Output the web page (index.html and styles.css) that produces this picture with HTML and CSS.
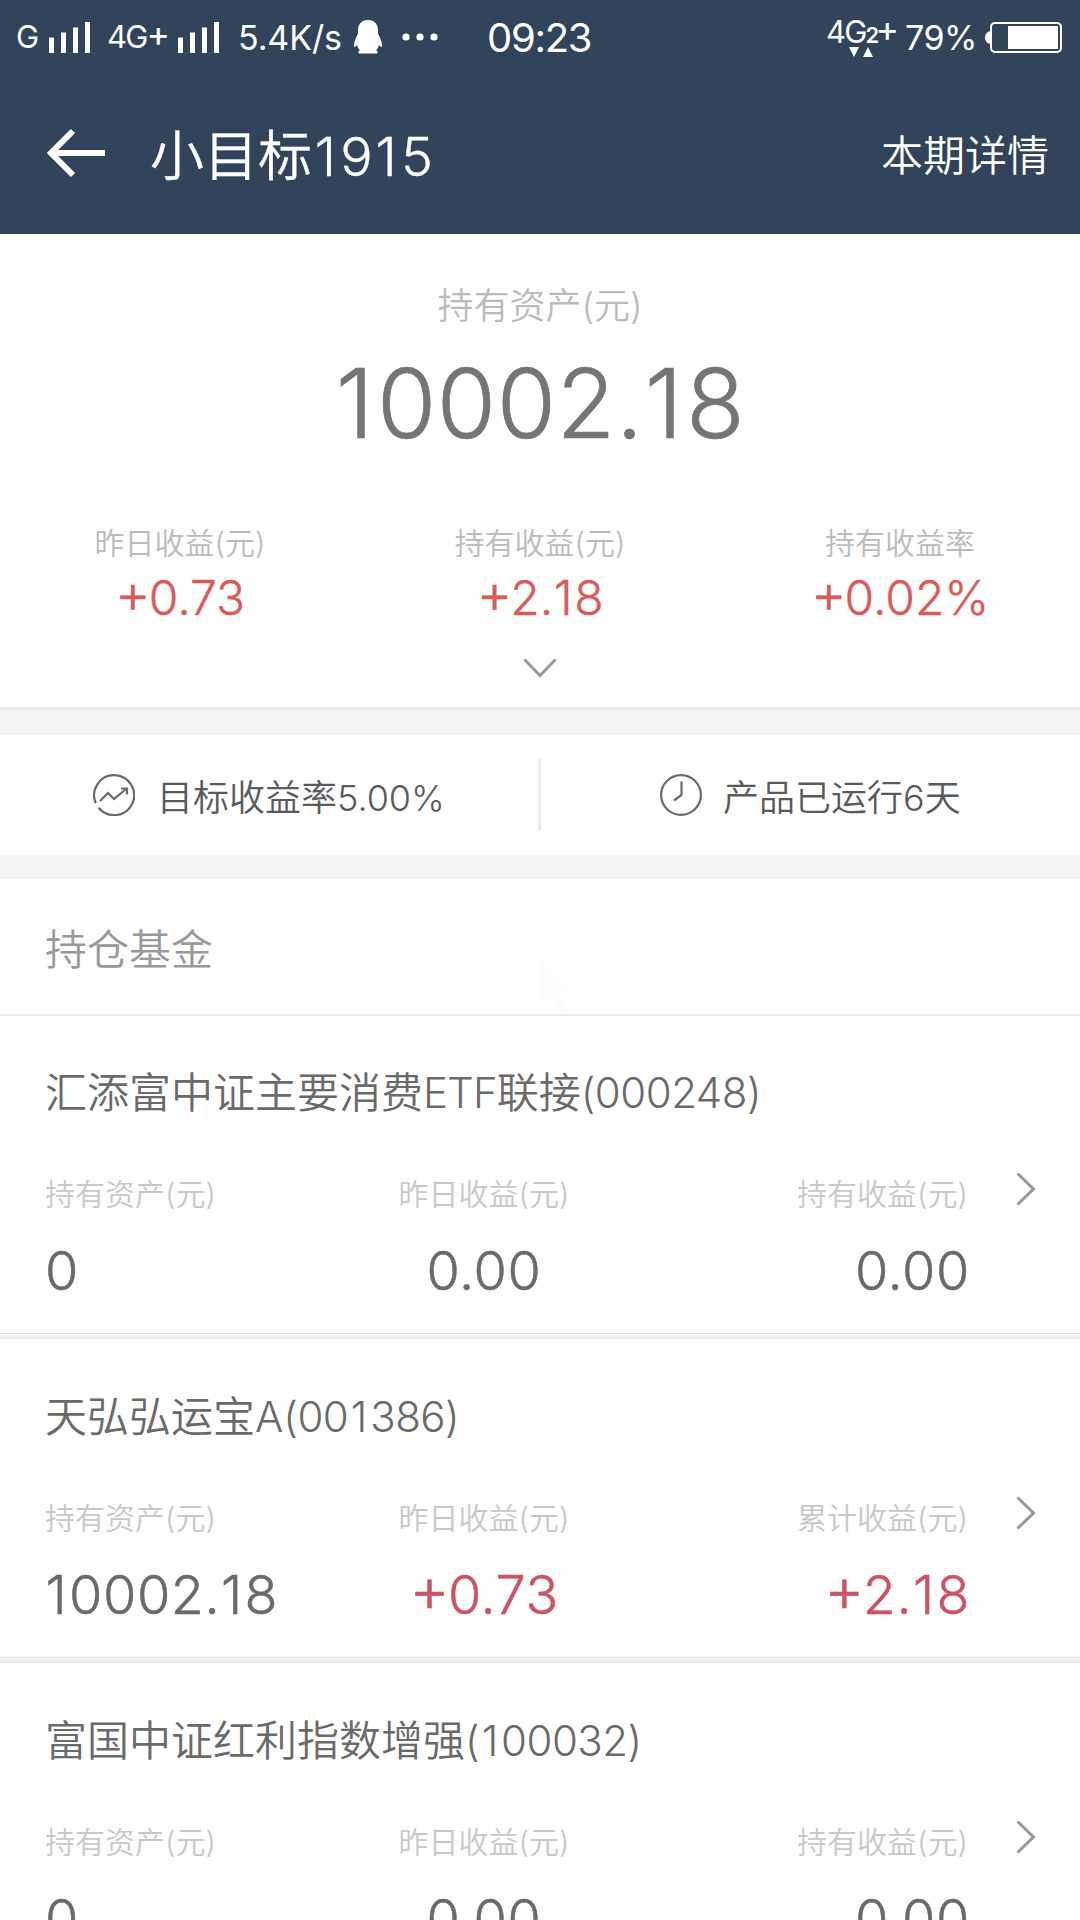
FILE: index.html
```html
<!DOCTYPE html>
<html lang="zh-CN">
<head>
<meta charset="utf-8">
<title>小目标1915</title>
<link rel="stylesheet" href="styles.css">
</head>
<body>
<header class="header">
  <div class="status">
    <span class="net net-g">G</span>
    <svg class="signal" width="42" height="31" viewBox="0 0 42 31"><path d="M0 15.500h5V31H0zM12 10.500h5V31h-5zM24 5.500h5V31h-5zM36 0h5v31h-5z"/></svg>
    <span class="net net-4g">4G<b class="plus">+</b></span>
    <svg class="signal signal-2" width="42" height="31" viewBox="0 0 42 31"><path d="M0 15.500h5V31H0zM12 10.500h5V31h-5zM24 5.500h5V31h-5zM36 0h5v31h-5z"/></svg>
    <span class="speed">5.4K/s</span>
    <svg class="penguin" width="28" height="34" viewBox="0 0 28 34"><path d="M14 0C7.500 0 4 4.500 4 10v3C4 15 0 20 0 25c0 2.500 1 2.500 3 0 .5 2 1.500 4 3 5.500-2 .5-2.500 3 0 3h16c2.500 0 2-2.500 0-3 1.500-1.500 2.500-3.500 3-5.500 2 2.500 3 2.500 3 0 0-5-4-10-4-12v-3C24 4.500 20.500 0 14 0z"/></svg>
    <svg class="dots" width="36" height="8" viewBox="0 0 36 8"><circle cx="4" cy="4" r="3.600"/><circle cx="18" cy="4" r="3.600"/><circle cx="32" cy="4" r="3.600"/></svg>
    <span class="clock">09:23</span>
    <span class="net net-data">4G<small class="sim">2</small><b class="plus">+</b><svg class="updown" width="24" height="10" viewBox="0 0 24 10"><path d="M0 0h10L5 10zM14 10h10L19 0z"/></svg></span>
    <span class="percent">79%</span>
    <svg class="battery" width="77" height="31" viewBox="0 0 77 31"><path d="M5 9.500v12H3.500Q0 19.500 0 15.500T3.500 9.500z"/><rect x="6" y="1" width="70" height="29" rx="4" fill="none" stroke="#fff" stroke-width="2"/><path d="M23 4h50v23H23z"/></svg>
  </div>
  <div class="navbar">
    <svg class="back" width="60" height="50" viewBox="0 0 60 50" fill="none" stroke="#fff" stroke-width="6"><path d="M59 25H5M27 3L5 25l22 22"/></svg>
    <h1 class="title">小目标<b class="one">1</b>9<b class="one">1</b>5</h1>
    <span class="detail">本期详情</span>
  </div>
</header>

<section class="summary">
  <div class="asset-label">持有资产(元)</div>
  <div class="asset"><b class="one">1</b>0002.<b class="one">1</b>8</div>
  <div class="gains">
    <div><div class="label">昨日收益(元)</div><div class="gain"><b class="plus">+</b>0.73</div></div>
    <div><div class="label">持有收益(元)</div><div class="gain"><b class="plus">+</b>2.<b class="one">1</b>8</div></div>
    <div><div class="label">持有收益率</div><div class="gain"><b class="plus">+</b>0.02%</div></div>
  </div>
  <svg class="expand" width="34" height="20" viewBox="0 0 34 20" fill="none" stroke="#9b9b9b" stroke-width="3"><path d="M1.500 1.500L17 17.500 32.500 1.500"/></svg>
</section>

<section class="facts">
  <div class="fact fact-target">
    <svg width="42" height="42" viewBox="0 0 42 42" fill="none" stroke="#6a6a6a" stroke-width="2.200"><path d="M2.800 29.200A20 20 0 1 1 5.600 33.800"/><path d="M7 27l8-8 6 6 12-10"/><path d="M28 14.500h6v6"/></svg>
    <span>目标收益率5.00%</span>
  </div>
  <div class="fact fact-days">
    <svg width="42" height="42" viewBox="0 0 42 42" fill="none" stroke="#6a6a6a" stroke-width="2.200"><circle cx="21" cy="21" r="19.900"/><path d="M21.500 7.500v13.500l-7.500 5.500"/></svg>
    <span>产品已运行6天</span>
  </div>
</section>

<section class="funds">
  <h2 class="section-title">持仓基金
    <svg class="pointer" width="36" height="54" viewBox="0 0 36 54"><path d="M0 0l36 32-16 2 8 18-8 2-9-18-11 9z"/></svg>
  </h2>
  <article class="fund">
    <h3 class="name">汇添富中证主要消费<span class="latin">ETF</span>联接<span class="code">(000248)</span></h3>
    <div class="cols">
      <div class="col"><div class="label">持有资产(元)</div><div class="value">0</div></div>
      <div class="col mid"><div class="label">昨日收益(元)</div><div class="value">0.00</div></div>
      <div class="col end"><div class="label">持有收益(元)</div><div class="value">0.00</div></div>
      <svg class="more" width="20" height="34" viewBox="0 0 20 34"><path d="M1.500 1.500L17.500 17l-16 15.500"/></svg>
    </div>
  </article>
  <article class="fund">
    <h3 class="name">天弘弘运宝A<span class="code">(00<b class="one">1</b>386)</span></h3>
    <div class="cols">
      <div class="col"><div class="label">持有资产(元)</div><div class="value"><b class="one">1</b>0002.<b class="one">1</b>8</div></div>
      <div class="col mid"><div class="label">昨日收益(元)</div><div class="value up"><b class="plus">+</b>0.73</div></div>
      <div class="col end"><div class="label">累计收益(元)</div><div class="value up"><b class="plus">+</b>2.<b class="one">1</b>8</div></div>
      <svg class="more" width="20" height="34" viewBox="0 0 20 34"><path d="M1.500 1.500L17.500 17l-16 15.500"/></svg>
    </div>
  </article>
  <article class="fund">
    <h3 class="name">富国中证红利指数增强<span class="code">(<b class="one">1</b>00032)</span></h3>
    <div class="cols">
      <div class="col"><div class="label">持有资产(元)</div><div class="value">0</div></div>
      <div class="col mid"><div class="label">昨日收益(元)</div><div class="value">0.00</div></div>
      <div class="col end"><div class="label">持有收益(元)</div><div class="value">0.00</div></div>
      <svg class="more" width="20" height="34" viewBox="0 0 20 34"><path d="M1.500 1.500L17.500 17l-16 15.500"/></svg>
    </div>
  </article>
</section>
</body>
</html>
```

FILE: styles.css
```css
* { box-sizing: border-box; }
body {
  margin: 0;
  width: 1080px;
  height: 1920px;
  overflow: hidden;
  background: #f4f4f4;
  font-family: Inter, "Noto Sans CJK SC", sans-serif;
  font-weight: 350;
}
h1, h2, h3 { margin: 0; font-weight: 350; }
b { font-weight: inherit; }
svg { display: block; flex: none; }

/* Numerals: wider "1" and a larger plus sign */
.one { margin: 0 .03em 0 .01em; }
.plus { margin-right: -.04em; font-size: 1.15em; line-height: 0; vertical-align: -.03em; }

.header { height: 234px; background: #31445c; color: #fff; }
.status {
  display: flex;
  align-items: center;
  height: 74px;
  padding-left: 16px;
  font-weight: 400;
  fill: #fff;
  white-space: nowrap;
}
.status span { flex: none; }
.net { font-size: 31px; line-height: 40px; letter-spacing: -1.8px; font-feature-settings: "case"; }
.net-g { width: 33px; }
.net-4g { width: 70px; margin-left: 16px; }
.signal-2 { margin-left: 1px; }
.speed { width: 116px; margin-left: 18px; font-size: 34px; line-height: 40px; padding-top: 2px; }
.speed { letter-spacing: -.1px; }
.percent { letter-spacing: -.5px; }
.dots { margin-left: 20px; }
.clock { width: 110px; margin-left: 49px; font-size: 40px; line-height: 40px; padding-top: 2px; letter-spacing: -1.3px; }
.net-data { position: relative; width: 79px; margin-left: 229px; padding-bottom: 8px; }
.net-data .plus { margin-left: -2px; }
.sim { font-size: 22px; font-weight: 600; }
.updown { position: absolute; left: 23px; top: 35px; }
.percent { width: 80px; font-size: 34px; line-height: 40px; padding-top: 2px; }

.navbar { display: flex; align-items: center; height: 160px; padding: 0 31px 0 46px; }
.back { margin-top: -2px; }
.title { margin-left: 44px; font-size: 54px; line-height: 80px; padding-top: 6px; -webkit-text-stroke: .3px; }
.title .one { margin: 0 .08em 0 .05em; }
.detail { margin-left: auto; font-size: 42px; line-height: 60px; padding-top: 4px; }

.summary { height: 476px; background: #fefefe; border-bottom: 3px solid #ebebeb; padding-top: 47px; text-align: center; }
.asset-label { font-size: 36px; line-height: 50px; color: #bbb; }
.asset { margin-top: 22px; font-size: 96px; line-height: 100px; color: #757575; letter-spacing: .6px; -webkit-text-stroke: .7px; }
.gains { display: grid; grid-template-columns: repeat(3, 1fr); margin-top: 70px; }
.label { font-size: 30px; line-height: 40px; color: #bbb; }
.gain { margin-top: 5px; font-size: 48px; line-height: 60px; color: #d95c5a; font-feature-settings: "case"; -webkit-text-stroke: .4px; }
.expand { margin: 30px auto 0; }

.facts { display: flex; align-items: center; height: 120px; margin-top: 25px; background: #fefefe; }
.fact { display: flex; align-items: center; width: 538px; height: 72px; font-size: 36px; color: #5a5a5a; }
.fact-target { width: 541px; padding-left: 93px; gap: 22px; border-right: 3px solid #ebebeb; }
.fact-days { padding-left: 119px; gap: 21px; }

.funds { margin-top: 24px; background: #fefefe; }
.section-title { position: relative; height: 137px; padding-left: 45px; border-bottom: 2px solid #e9e9e9; font-size: 42px; line-height: 142px; color: #999; }
.pointer { position: absolute; left: 540px; top: 80px; fill: #fcfcfc; }
.fund {
  height: 324px;
  padding: 47px 45px 0;
  background: linear-gradient(#ddd 0 1px, #fefefe 1px 2px, #eee 2px 5px, #e3e3e3 5px 6px) bottom / 100% 6px no-repeat;
}
.fund:nth-of-type(1) { height: 323px; }
.fund + .fund { padding-top: 48px; }
.name { font-size: 42px; line-height: 60px; color: #6a6a6a; }
.latin { letter-spacing: -.9px; }
.code { letter-spacing: -.5px; }
.code .one { margin: 0 .08em 0 .06em; }
.cols { display: grid; grid-template-columns: 301px 276px 346px 1fr; margin-top: 51px; }
.cols .label { color: #c8c8c8; }
.mid { text-align: center; }
.end { text-align: right; }
.value { margin-top: 27px; font-size: 54px; line-height: 60px; color: #6a6a6a; letter-spacing: .6px; font-feature-settings: "case"; -webkit-text-stroke: .5px; }
.end .value { margin-right: -2px; }
.up { color: #cb5565; }
.more { margin: -2px 0 0 48px; fill: none; stroke: #999; stroke-width: 3; }
```
